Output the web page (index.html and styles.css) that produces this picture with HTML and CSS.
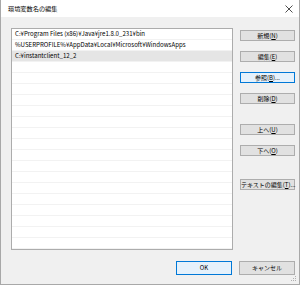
FILE: index.html
```html
<!DOCTYPE html>
<html lang="ja">

<head>
    <meta charset="UTF-8">
    <meta name="viewport" content="width=device-width, initial-scale=1.0">
    <title>環境変数名の編集</title>
    <link rel="stylesheet" href="styles.css">
</head>

<body>
    <div class="window">
        <div class="titleBar">
            <span class="title">環境変数名の編集</span>
            <svg class="close" width="8" height="8" viewBox="0 0 8 8">
                <path d="M0.5 0.5 L7.5 7.5 M7.5 0.5 L0.5 7.5" stroke="#222" stroke-width="0.8" fill="none" />
            </svg>
        </div>
        <div class="main">
            <ul class="pathList">
                <li>C:¥Program Files (x86)¥Java¥jre1.8.0_231¥bin</li>
                <li>%USERPROFILE%¥AppData¥Local¥Microsoft¥WindowsApps</li>
                <li class="selected">C:¥instantclient_12_2</li>
                <li></li>
                <li></li>
                <li></li>
                <li></li>
                <li></li>
                <li></li>
                <li></li>
                <li></li>
                <li></li>
                <li></li>
                <li></li>
                <li></li>
                <li></li>
                <li></li>
                <li></li>
                <li></li>
                <li></li>
            </ul>
            <div class="sideButs">
                <div class="group">
                    <button class="btn">新規(<u>N</u>)</button>
                    <button class="btn">編集(<u>E</u>)</button>
                    <button class="btn focused">参照(<u>B</u>)...</button>
                    <button class="btn">削除(<u>D</u>)</button>
                </div>
                <div class="group">
                    <button class="btn">上へ(<u>U</u>)</button>
                    <button class="btn">下へ(<u>O</u>)</button>
                </div>
                <div class="group last">
                    <button class="btn">テキストの編集(<u>T</u>)...</button>
                </div>
            </div>
        </div>
        <div class="footer">
            <button class="btn big default">OK</button>
            <button class="btn big">キャンセル</button>
        </div>
        <svg class="grip" width="6" height="6" viewBox="0 0 6 6">
            <rect x="4" y="0" width="1" height="1" fill="#b0b0b0" />
            <rect x="2" y="2" width="1" height="1" fill="#b0b0b0" />
            <rect x="4" y="2" width="1" height="1" fill="#b0b0b0" />
            <rect x="0" y="4" width="1" height="1" fill="#b0b0b0" />
            <rect x="2" y="4" width="1" height="1" fill="#b0b0b0" />
            <rect x="4" y="4" width="1" height="1" fill="#b0b0b0" />
        </svg>
    </div>
</body>

</html>
```

FILE: styles.css
```css
* {
    padding: 0;
    margin: 0;
    list-style: none;
    box-sizing: border-box;
}

body {
    width: 300px;
    height: 285px;
    overflow: hidden;
    font-family: "Noto Sans CJK JP", "Noto Sans", sans-serif;
    font-size: 6px;
    color: #000;
}

.window {
    position: relative;
    width: 300px;
    height: 285px;
    background-color: #f0f0f0;
    border: 1px solid #a8a8a8;
    border-top: none;
    display: flex;
    flex-direction: column;
}

.titleBar {
    flex: none;
    height: 17px;
    background-color: #fff;
    display: flex;
    align-items: center;
    justify-content: space-between;
    padding: 0 6px 0 7px;
}

.title {
    font-size: 6.2px;
}

/* 一覧とボタン列 */
.main {
    flex: 1;
    min-height: 0;
    display: flex;
    gap: 7px;
    padding: 11px 4px 0 10px;
}

.pathList {
    width: 222px;
    background-color: #fff;
    border: 1px solid #acacac;
    overflow: hidden;
}

.pathList li {
    height: 11px;
    line-height: 10px;
    padding-left: 3px;
    font-size: 6.1px;
    border-bottom: 1px solid #f2f2f2;
    white-space: nowrap;
}

.pathList li.selected {
    background-color: #e5e5e5;
}

.sideButs {
    width: 55px;
    padding-top: 2px;
    display: flex;
    flex-direction: column;
    gap: 20px;
}

.group {
    display: flex;
    flex-direction: column;
    gap: 10px;
}

.group.last {
    margin-top: 3px;
}

.btn {
    height: 11px;
    width: 55px;
    padding: 0;
    background-color: #e1e1e1;
    border: 1px solid #adadad;
    font-family: inherit;
    font-size: 6px;
    line-height: 9px;
    color: #000;
    white-space: nowrap;
}

.btn u {
    text-underline-offset: 1px;
}

.btn.focused {
    border-color: #0078d7;
    background-color: #e5f1fb;
}

.footer {
    flex: none;
    height: 34px;
    display: flex;
    justify-content: flex-end;
    align-items: flex-start;
    gap: 7px;
    padding: 11px 4px 0 0;
}

.btn.big {
    width: 56px;
    height: 14px;
    line-height: 12px;
}

.btn.default {
    border-color: #0078d7;
    background-color: #e5f1fb;
}

/* リサイズつまみ */
.grip {
    position: absolute;
    right: 2px;
    bottom: 2px;
}
```
